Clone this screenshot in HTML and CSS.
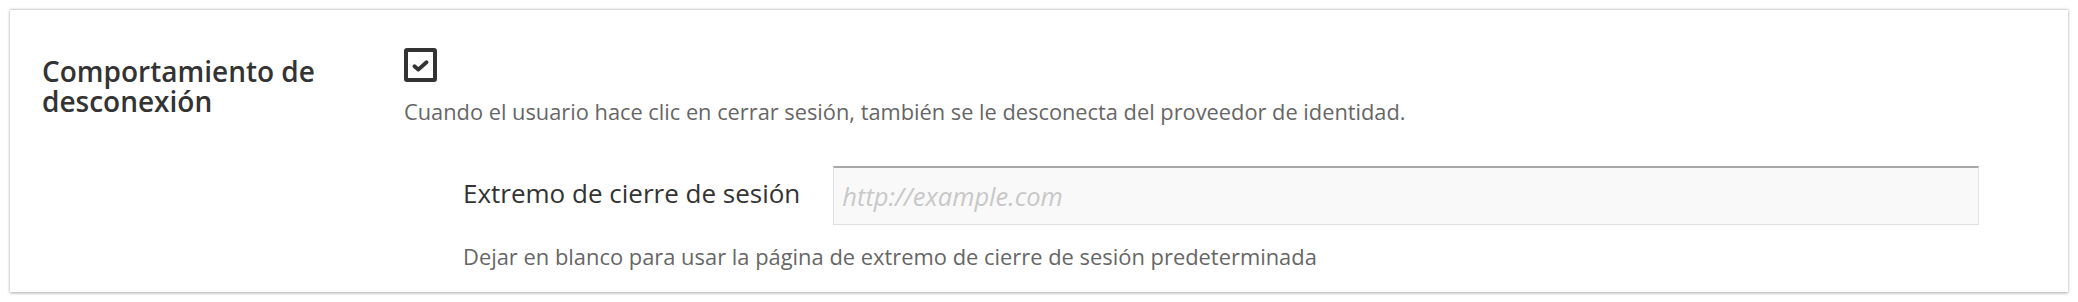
FILE: index.html
```html
<!DOCTYPE html>
<html lang="es">
<head>
<meta charset="utf-8">
<link rel="stylesheet" href="styles.css">
</head>
<body>
<div class="card">
  <div class="row">
    <div class="label">Comportamiento de desconexión</div>
    <div class="content">
      <div class="checkbox">
        <svg viewBox="0 0 18 13" width="17" height="12"><path d="M2.5 6.8 L6.6 10.4 L15.5 2.5" fill="none" stroke="#333" stroke-width="4.2" stroke-linecap="round" stroke-linejoin="round"/></svg>
      </div>
      <p class="desc">Cuando el usuario hace clic en cerrar sesión, también se le desconecta del proveedor de identidad.</p>
      <div class="sub">
        <div class="field">
          <label class="field-label">Extremo de cierre de sesión</label>
          <div class="input"><span class="placeholder">http://example.com</span></div>
        </div>
        <p class="hint">Dejar en blanco para usar la página de extremo de cierre de sesión predeterminada</p>
      </div>
    </div>
  </div>
</div>
</body>
</html>
```
FILE: styles.css
```css
html, body {
  margin: 0;
  padding: 0;
  background: #fff;
}
body {
  padding: 9px 10px;
  font-family: "Open Sans", "Noto Sans", sans-serif;
  color: #333;
}
.card {
  height: 283px;
  box-sizing: border-box;
  background: #fff;
  box-shadow: 0 1px 3px rgba(0,0,0,0.35);
  border-top: 1px solid #d8d8d8;
  padding: 38px 89px 0 32px;
}
.row {
  display: grid;
  grid-template-columns: 362px 1fr;
}
.label {
  font-size: 28px;
  font-weight: 600;
  line-height: 30px;
  color: #333;
  padding-top: 8px;
  width: 310px;
}
.content {
  display: flex;
  flex-direction: column;
}
.checkbox {
  width: 33px;
  height: 34px;
  box-sizing: border-box;
  border: 4px solid #333;
  border-radius: 3px;
  display: flex;
  align-items: center;
  justify-content: center;
  padding-top: 2px;
}
.desc {
  margin: 16px 0 0;
  font-size: 21.8px;
  line-height: 28px;
  color: #666;
}
.sub {
  margin-top: 40px;
  padding-left: 59px;
}
.field {
  display: flex;
  align-items: center;
  gap: 33px;
}
.field-label {
  font-size: 26px;
  line-height: 59px;
  color: #333;
  white-space: nowrap;
  margin-top: -5px;
}
.input {
  flex: 1;
  height: 59px;
  box-sizing: border-box;
  background: #f9f9f9;
  border: 1px solid #e0e0e0;
  border-top: 2px solid #a8a8a8;
  display: flex;
  align-items: center;
  padding-left: 8px;
}
.placeholder {
  font-style: italic;
  font-size: 25.5px;
  color: #c8c8c8;
}
.hint {
  margin: 18px 0 0;
  font-size: 21.9px;
  line-height: 28px;
  color: #666;
}
```
